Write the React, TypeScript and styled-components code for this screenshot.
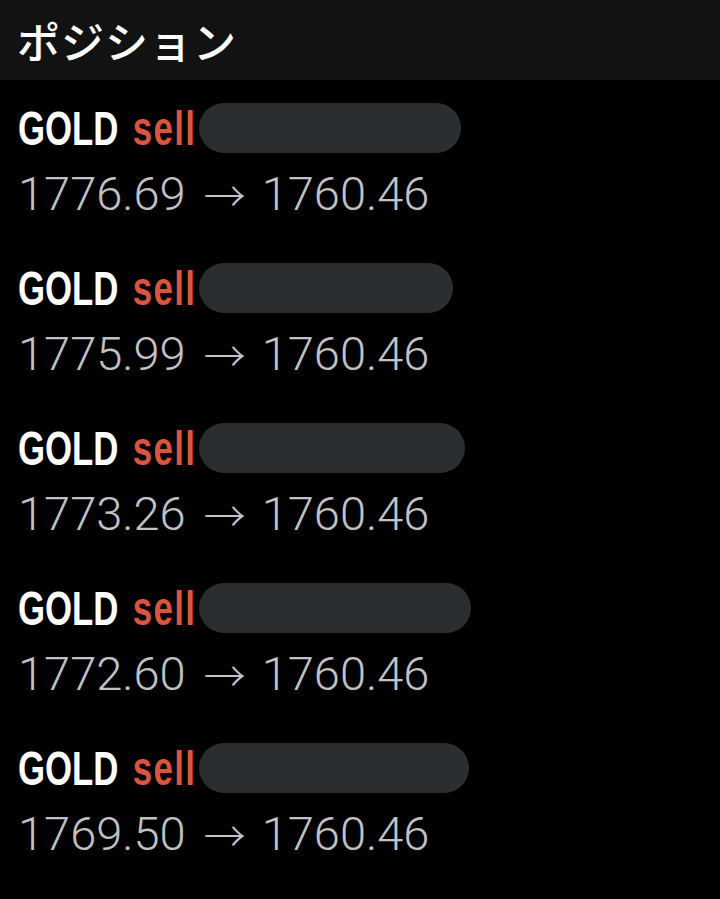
import React from 'react';
import styled, { createGlobalStyle } from 'styled-components';

type Position = {
    symbol: string;
    side: string;
    open: string;
    current: string;
    maskWidth: number;
};

const positions: Position[] = [
    { symbol: 'GOLD', side: 'sell', open: '1776.69', current: '1760.46', maskWidth: 262 },
    { symbol: 'GOLD', side: 'sell', open: '1775.99', current: '1760.46', maskWidth: 254 },
    { symbol: 'GOLD', side: 'sell', open: '1773.26', current: '1760.46', maskWidth: 266 },
    { symbol: 'GOLD', side: 'sell', open: '1772.60', current: '1760.46', maskWidth: 272 },
    { symbol: 'GOLD', side: 'sell', open: '1769.50', current: '1760.46', maskWidth: 270 },
];

const GlobalStyle = createGlobalStyle`
    html, body {
        margin: 0;
        padding: 0;
        background: #000;
    }
`;

const Screen = styled.div`
    width: 720px;
    height: 899px;
    background: #000;
    overflow: hidden;
`;

const Header = styled.div`
    height: 80px;
    background: #121212;
    display: flex;
    align-items: center;
    padding-left: 17px;
    box-sizing: border-box;
`;

const Title = styled.div`
    font-family: 'Noto Sans CJK JP', sans-serif;
    font-weight: 500;
    font-size: 43px;
    color: #fff;
    letter-spacing: 1px;
    margin-top: -1px;
`;

const List = styled.div`
    padding: 23px 0 0 18px;
`;

const Item = styled.div`
    height: 160px;
`;

const TopRow = styled.div`
    display: flex;
    align-items: center;
    height: 50px;
`;

// condensed look: the installed sans has no narrow face, so squeeze it
const Label = styled.div`
    display: flex;
    align-items: baseline;
    transform: scaleX(0.71);
    transform-origin: left center;
    margin-right: -75px;
    font-family: 'Liberation Sans', sans-serif;
    font-weight: bold;
    font-size: 49px;
    white-space: nowrap;
`;

const Symbol = styled.span`
    color: #fff;
    margin-right: 20px;
`;

const Side = styled.span`
    color: #d9553f;
    letter-spacing: 2px;
`;

const Mask = styled.div`
    height: 50px;
    margin-left: 5px;
    border-radius: 25px;
    background: #2b2e31;
`;

const Prices = styled.div`
    display: flex;
    align-items: center;
    margin-top: 15px;
    height: 50px;
    font-family: Roboto, 'Liberation Sans', sans-serif;
    font-weight: 300;
    font-size: 47px;
    color: #c2c2c2;
    white-space: nowrap;
`;

const Arrow = styled.span`
    font-family: 'Noto Sans CJK JP', sans-serif;
    font-weight: 300;
    font-size: 42px;
    margin: 0 16px 0 18px;
`;

const App = (): JSX.Element => {
    return (
        <Screen>
            <GlobalStyle />
            <Header>
                <Title>ポジション</Title>
            </Header>
            <List>
                {positions.map((p, i) => (
                    <Item key={i}>
                        <TopRow>
                            <Label>
                                <Symbol>{p.symbol}</Symbol>
                                <Side>{p.side}</Side>
                            </Label>
                            <Mask style={{ width: p.maskWidth }} />
                        </TopRow>
                        <Prices>
                            <span>{p.open}</span>
                            <Arrow>→</Arrow>
                            <span>{p.current}</span>
                        </Prices>
                    </Item>
                ))}
            </List>
        </Screen>
    );
};

export default App;
